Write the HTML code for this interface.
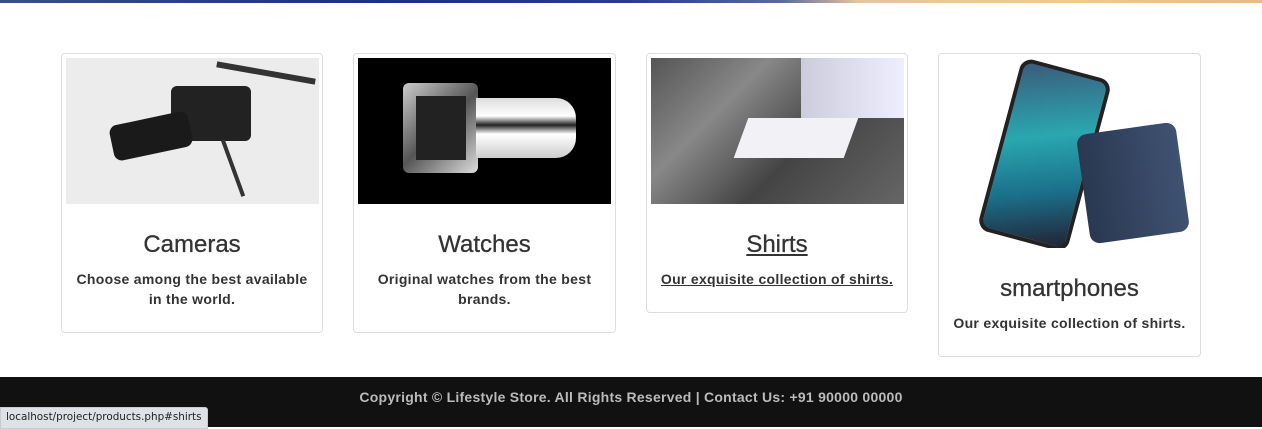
<!DOCTYPE html>
<html><head><style>
body{margin:0;width:1262px;height:427px;background:#fff;font-family:"Liberation Sans",Arial,sans-serif;position:relative;overflow:hidden}
.top{position:absolute;left:0;top:0;width:1262px;height:3px;background:linear-gradient(90deg,#3a4f8a 0%,#1d2f80 30%,#2a3b8e 50%,#5a6aa0 62%,#e8c49a 68%,#f6c68d 85%,#e9b987 100%)}
.card{position:absolute;top:53px;border:1px solid #ddd;border-radius:4px;background:#fff;box-sizing:border-box}
.img{position:absolute;left:4px;top:4px;width:253px;height:146px;overflow:hidden}
h3{position:absolute;left:0;right:0;margin:0;text-align:center;font-size:24px;font-weight:normal;color:#333;-webkit-text-stroke:0.3px #333}
p{position:absolute;left:8px;right:8px;margin:0;text-align:center;font-size:14px;letter-spacing:0.3px;font-weight:bold;color:#333;line-height:20px}
.foot{position:absolute;left:0;top:377px;width:1262px;height:50px;background:#111;color:#bbb;font-weight:bold;font-size:14px;letter-spacing:0.25px;text-align:center;line-height:40px}
.status{position:absolute;left:0;top:407px;height:20px;padding:0 5px;background:#dee1e6;border:1px solid #c8cbd0;border-radius:0 3px 0 0;font-family:"DejaVu Sans",sans-serif;font-size:10.4px;line-height:19px;color:#222}
</style></head><body>
<div class="top"></div>

<div class="card" style="left:61px;width:262px;height:280px">
 <div class="img" style="background:#ececec">
  <div style="position:absolute;left:105px;top:28px;width:80px;height:55px;background:#222;border-radius:6px"></div>
  <div style="position:absolute;left:45px;top:60px;width:80px;height:36px;background:#1a1a1a;border-radius:8px;transform:rotate(-12deg)"></div>
  <div style="position:absolute;left:150px;top:12px;width:100px;height:6px;background:#333;transform:rotate(10deg)"></div>
  <div style="position:absolute;left:165px;top:80px;width:4px;height:60px;background:#333;transform:rotate(-20deg)"></div>
 </div>
 <h3 style="top:177px">Cameras</h3>
 <p style="top:215px">Choose among the best available in the world.</p>
</div>

<div class="card" style="left:353px;width:263px;height:280px">
 <div class="img" style="background:#000">
  <div style="position:absolute;left:45px;top:25px;width:75px;height:90px;background:linear-gradient(135deg,#ccc,#555,#ddd);border-radius:6px"></div>
  <div style="position:absolute;left:58px;top:38px;width:50px;height:64px;background:#222"></div>
  <div style="position:absolute;left:118px;top:40px;width:100px;height:60px;background:linear-gradient(180deg,#ddd 0,#fff 30%,#222 45%,#fff 60%,#ccc 100%);border-radius:0 20px 20px 0"></div>
 </div>
 <h3 style="top:177px">Watches</h3>
 <p style="top:215px;left:20px;right:20px">Original watches from the best brands.</p>
</div>

<div class="card" style="left:646px;width:262px;height:260px">
 <div class="img" style="background:linear-gradient(135deg,#555 0%,#888 30%,#444 60%,#666 100%)">
  <div style="position:absolute;left:150px;top:0;width:103px;height:60px;background:linear-gradient(90deg,#ccd,#eef)"></div>
  <div style="position:absolute;left:90px;top:60px;width:110px;height:40px;background:#f2f2f6;transform:skewX(-20deg)"></div>
 </div>
 <h3 style="top:177px"><span style="text-decoration:underline">Shirts</span></h3>
 <p style="top:215px;left:0;right:0"><span style="text-decoration:underline">Our exquisite collection of shirts.</span></p>
</div>

<div class="card" style="left:938px;width:263px;height:304px">
 <div class="img" style="height:190px;background:#fff">
  <div style="position:absolute;left:55px;top:8px;width:85px;height:170px;background:linear-gradient(160deg,#3a5b7a,#2aa7b0 40%,#1b6f8a 70%,#223);border:4px solid #222;border-radius:12px;transform:rotate(15deg)"></div>
  <div style="position:absolute;left:140px;top:70px;width:100px;height:110px;background:linear-gradient(90deg,#2a3850,#3f5272);border-radius:10px;transform:rotate(-8deg)"></div>
 </div>
 <h3 style="top:221px">smartphones</h3>
 <p style="top:259px;left:0;right:0">Our exquisite collection of shirts.</p>
</div>

<div class="foot">Copyright © Lifestyle Store. All Rights Reserved | Contact Us: +91 90000 00000</div>
<div class="status">localhost/project/products.php#shirts</div>
</body></html>
